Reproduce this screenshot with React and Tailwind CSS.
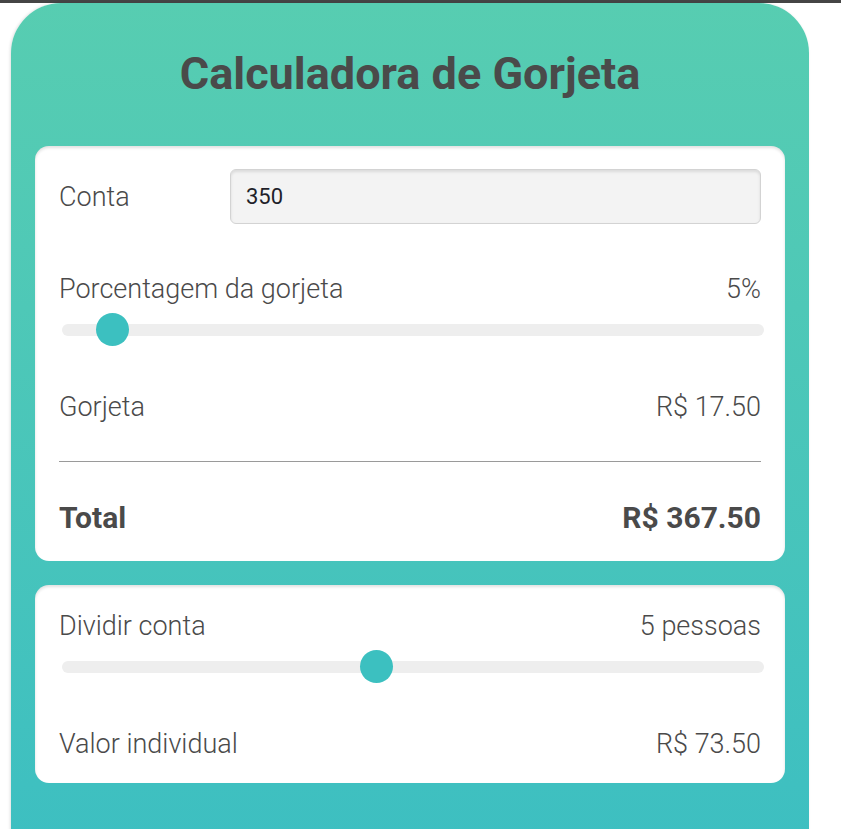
import { useState } from 'react'

function Slider({ pos }) {
  return (
    <div className="relative h-[33px] flex items-center">
      <div className="w-full h-3 rounded-full bg-[#eeeeee] ml-[3px] mr-[-4px]" />
      <div
        className="absolute top-0 w-[33px] h-[33px] rounded-full bg-[#3cc0c0]"
        style={{ left: `${pos}px` }}
      />
    </div>
  )
}

export default function App() {
  const [bill] = useState('350')

  return (
    <div className="min-h-screen bg-white font-['Roboto',sans-serif] text-[#4a4a4a] overflow-hidden">
      <div className="h-[3px] bg-[#454545]" />
      <div className="ml-[11px] w-[798px] h-[840px] rounded-t-[50px] bg-gradient-to-b from-[#57cdb1] to-[#3dbfc1] px-6 shadow-[-1px_0_3px_rgba(0,0,0,0.12)]">
        <h1 className="pt-[45px] text-center text-[45px] leading-[52px] font-bold text-[#4a4a4a]">
          Calculadora de Gorjeta
        </h1>

        <div className="mt-[46px] bg-white rounded-[14px] px-6 pt-[23px] pb-[25px] shadow-[inset_0_2px_3px_rgba(0,0,0,0.12)]">
          <div className="flex items-center">
            <span className="w-[171px] text-[27px] leading-8 font-light">Conta</span>
            <div className="flex-1 h-[55px] flex items-center rounded-md border border-[#d3d3d3] bg-[#f3f3f3] px-[15px] text-[22px] font-normal text-[#1f1f2a] shadow-[inset_0_2px_3px_rgba(0,0,0,0.1)]">
              {bill}
            </div>
          </div>

          <div className="mt-[49px] flex justify-between text-[27px] font-light leading-8">
            <span>Porcentagem da gorjeta</span>
            <span>5%</span>
          </div>
          <div className="mt-2">
            <Slider pos={37} />
          </div>

          <div className="mt-[45px] flex justify-between text-[27px] font-light leading-8">
            <span>Gorjeta</span>
            <span>R$ 17.50</span>
          </div>

          <div className="mt-[38px] h-px bg-[#9a9a9a]" />

          <div className="mt-[38px] flex justify-between text-[30px] font-bold leading-9">
            <span>Total</span>
            <span>R$ 367.50</span>
          </div>
        </div>

        <div className="mt-6 bg-white rounded-[14px] px-6 pt-[25px] pb-[23px] shadow-[inset_0_2px_3px_rgba(0,0,0,0.12)]">
          <div className="flex justify-between text-[27px] font-light leading-8">
            <span>Dividir conta</span>
            <span>5 pessoas</span>
          </div>
          <div className="mt-2">
            <Slider pos={301} />
          </div>
          <div className="mt-[45px] flex justify-between text-[27px] font-light leading-8">
            <span>Valor individual</span>
            <span>R$ 73.50</span>
          </div>
        </div>
      </div>
    </div>
  )
}
